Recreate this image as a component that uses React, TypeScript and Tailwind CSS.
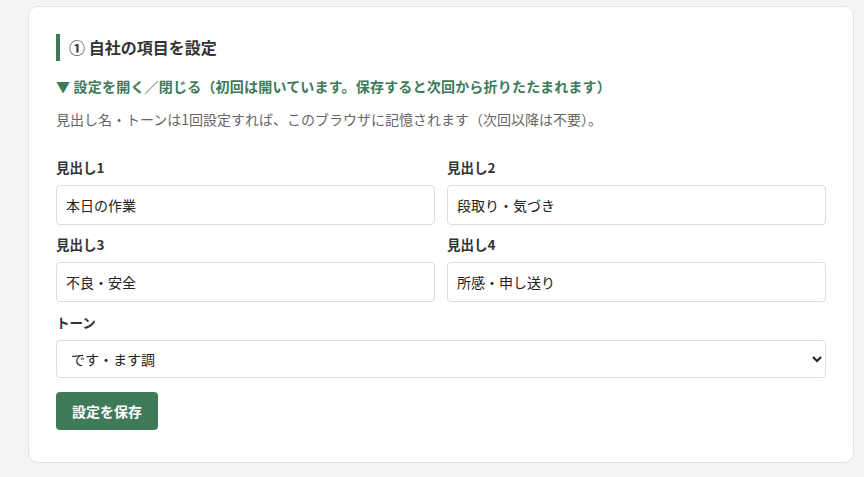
import React from "react";

const font = { fontFamily: '"Noto Sans CJK JP", "Noto Sans", sans-serif' };

export default function App() {
  const inputCls =
    "w-full h-[40px] rounded-[4px] border border-[#dcdcdc] bg-white px-[9px] text-[14px] text-[#222] outline-none";
  const labelCls = "block text-[13.5px] font-bold text-[#333] leading-[20px] mb-[8px]";
  return (
    <div className="min-h-[477px] bg-[#f4f4f2] pt-[6px] pl-[28px] pr-[10px] pb-[14px]" style={font}>
      <div className="w-[826px] rounded-[10px] border border-[#e3e3e0] bg-white px-[27px] pt-[27px] pb-[32px]">
        <div className="flex items-center h-[27px] border-l-[4px] border-[#3d7a5a] pl-[9px]">
          <h2 className="text-[16px] font-bold text-[#333] leading-[27px]">① 自社の項目を設定</h2>
        </div>
        <div className="mt-[15px] text-[14px] font-bold text-[#3d7a5a] leading-[20px] tracking-[0.2px]">
          ▼ 設定を開く／閉じる（初回は開いています。保存すると次回から折りたたまれます）
        </div>
        <p className="mt-[13px] text-[14px] text-[#666] leading-[20px]">
          見出し名・トーンは1回設定すれば、このブラウザに記憶されます（次回以降は不要）。
        </p>
        <div className="mt-[28px] grid grid-cols-2 gap-x-[12px] gap-y-[9px]">
          <div>
            <label className={labelCls}>見出し1</label>
            <input className={inputCls} defaultValue="本日の作業" />
          </div>
          <div>
            <label className={labelCls}>見出し2</label>
            <input className={inputCls} defaultValue="段取り・気づき" />
          </div>
          <div>
            <label className={labelCls}>見出し3</label>
            <input className={inputCls} defaultValue="不良・安全" />
          </div>
          <div>
            <label className={labelCls}>見出し4</label>
            <input className={inputCls} defaultValue="所感・申し送り" />
          </div>
        </div>
        <div className="mt-[10px]">
          <label className={labelCls}>トーン</label>
          <select
            className="w-full h-[38px] rounded-[4px] border border-[#dcdcdc] bg-white px-[10px] text-[14px] text-[#222] outline-none"
            defaultValue="desu"
          >
            <option value="desu">です・ます調</option>
            <option value="da">だ・である調</option>
          </select>
        </div>
        <button className="mt-[14px] h-[38px] px-[16px] rounded-[4px] bg-[#3f7b5b] text-white text-[14px] font-bold">
          設定を保存
        </button>
      </div>
    </div>
  );
}
